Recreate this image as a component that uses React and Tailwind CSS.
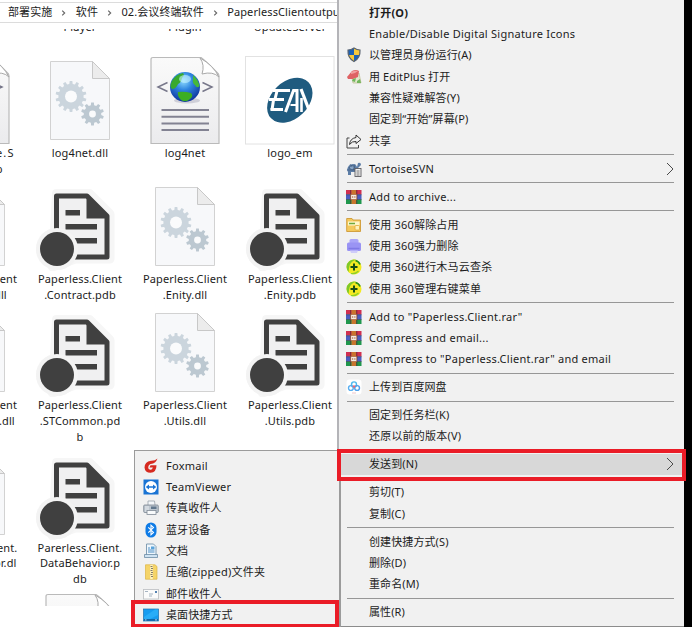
import React from "react";

const GEAR_BIG = gear(20.5, 35, 15.5, 12.6, 14);
const GEAR_SMALL = gear(42, 52.5, 11.5, 8.8, 10);

function gear(cx, cy, outer, inner, teeth) {
  const pts = [];
  const step = (Math.PI * 2) / teeth;
  for (let i = 0; i < teeth; i++) {
    const a = i * step - Math.PI / 2;
    [[-0.3, inner], [-0.19, outer], [0.19, outer], [0.3, inner]].forEach(([o, r]) => {
      pts.push(`${(cx + Math.cos(a + o * step) * r).toFixed(2)},${(cy + Math.sin(a + o * step) * r).toFixed(2)}`);
    });
  }
  return pts.join(" ");
}

/* ---------- file icons (all drawn in a 90x90 box) ---------- */

function DllIcon() {
  return (
    <svg width="90" height="90" viewBox="0 0 90 90" className="block">
      <g transform="translate(15.5 6.5)">
        <path d="M0 0H42L59 17V78H0Z" fill="#f7f8fa" stroke="#d2d2d2" />
        <path d="M42 0V17H59Z" fill="#ececec" stroke="#c8c8c8" />
        <polygon points={GEAR_BIG} fill="#cbd5dd" />
        <circle cx="20.5" cy="35" r="6" fill="#fafbfc" />
        <polygon points={GEAR_SMALL} fill="#bcc8d1" />
        <circle cx="42" cy="52.5" r="3.4" fill="#fafbfc" />
      </g>
    </svg>
  );
}

function PdbIcon() {
  return (
    <svg width="90" height="90" viewBox="0 0 90 90" className="block">
      <g transform="translate(0.5 0)">
        <path d="M21 12.5H54L74.5 33V78H40L17 86Z" fill="#f6f6f6" stroke="#f6f6f6" strokeWidth="9" strokeLinejoin="round" />
        <circle cx="21.5" cy="68" r="21" fill="#f6f6f6" />
        <path d="M21 15H51.5L71.5 35V76H21Z" fill="#f0f0f1" stroke="#404040" strokeWidth="5" strokeLinejoin="round" />
        <path d="M51 14L73 36V37.5H51Z" fill="#404040" />
        <path d="M30 31.8H44.5M30 45.8H61.5M30 59.8H61.5" stroke="#404040" strokeWidth="5.4" />
        <circle cx="21.5" cy="68" r="21" fill="#f3f3f3" />
        <circle cx="21.5" cy="68" r="17" fill="#404040" />
      </g>
    </svg>
  );
}

function ConfigIcon() {
  return (
    <svg width="90" height="90" viewBox="0 0 90 90" className="block">
      <defs>
        <radialGradient id="globe" cx="0.45" cy="0.3" r="0.75">
          <stop offset="0" stopColor="#8fdcff" />
          <stop offset="0.4" stopColor="#2f86e0" />
          <stop offset="1" stopColor="#0a2a94" />
        </radialGradient>
        <linearGradient id="sheet" x1="0" y1="0" x2="0" y2="1">
          <stop offset="0" stopColor="#fafafa" />
          <stop offset="1" stopColor="#ebebed" />
        </linearGradient>
      </defs>
      <path d="M13 2.500H61Q66 6 78.500 19Q79 20 79 22V88.500H11V4.500Q11 2.500 13 2.500Z" fill="url(#sheet)" stroke="#bababa" strokeWidth="1.200" />
      <path d="M60 3Q65 10 62 19Q73 16 79 22Q73 10 60 3Z" fill="#fff" stroke="#a9a9a9" strokeWidth="1" />
      <path d="M27.500 27.500L18 32L27.500 36.500M62.500 27.500L72 32L62.500 36.500" fill="none" stroke="#77778a" strokeWidth="1.500" />
      <ellipse cx="47" cy="45.500" rx="13" ry="3" fill="#cfcfd8" />
      <circle cx="45" cy="32" r="15" fill="url(#globe)" />
      <path d="M32 26Q36 19 43 18Q45 20 42 23Q41 28 38 29Q36 34 32 34Q29 31 32 26Z" fill="#38a92f" />
      <path d="M38 37Q44 36 51 38Q54 41 50 44Q46 48 41 45Q37 41 38 37Z" fill="#3cae22" />
      <path d="M53 20Q58 24 59.500 31Q57 34 55 30Q52 28 53 24Z" fill="#46b83a" />
      <ellipse cx="45" cy="24" rx="6" ry="4" fill="#c7f4ff" opacity="0.6" />
      <path d="M21.500 55H69M21.500 61.800H69M21.500 68.500H69M21.500 75H69" stroke="#828292" strokeWidth="2" />
    </svg>
  );
}

function LogoIcon() {
  return (
    <svg width="90" height="90" viewBox="0 0 90 90" className="block">
      <rect x="0.500" y="1.500" width="88.500" height="87.500" fill="#fff" stroke="#e2e2e2" />
      <ellipse cx="44.800" cy="45.300" rx="26" ry="18.500" transform="rotate(-44 44.800 45.300)" fill="#1f5b7f" />
      <g fill="none" stroke="#fff">
        <path d="M28 35.500H45M24 44.500H39M25.500 54.500H38" strokeWidth="2.800" />
        <path d="M32 36L30 44M28.500 45L27 55" strokeWidth="3" />
        <path d="M40.500 57L48.500 35.500H52V57" strokeWidth="3" />
        <path d="M45.500 50H51" strokeWidth="2" />
        <path d="M56.500 57V43" strokeWidth="2.600" />
        <path d="M56 34L64 55" strokeWidth="3.200" />
      </g>
    </svg>
  );
}

const ICONS = { dll: DllIcon, pdb: PdbIcon, config: ConfigIcon, logo: LogoIcon };

const FILES = [
  [
    ["config", ["Paperlesse.S", "ervice.pdb"]],
    ["dll", ["log4net.dll"]],
    ["config", ["log4net"]],
    ["logo", ["logo_em"]],
  ],
  [
    ["dll", ["Paperless.Client", ".Contract.dll"]],
    ["pdb", ["Paperless.Client", ".Contract.pdb"]],
    ["dll", ["Paperless.Client", ".Enity.dll"]],
    ["pdb", ["Paperless.Client", ".Enity.pdb"]],
  ],
  [
    ["dll", ["Paperless.Client", ".STCommon.dll"]],
    ["pdb", ["Paperless.Client", ".STCommon.pd", "b"]],
    ["dll", ["Paperless.Client", ".Utils.dll"]],
    ["pdb", ["Paperless.Client", ".Utils.pdb"]],
  ],
  [
    ["dll", ["Parerless.Client.", "DataBehavior.dl"]],
    ["pdb", ["Parerless.Client.", "DataBehavior.p", "db"]],
  ],
];

const ROW_HEIGHTS = ["h-[126.3px]", "h-[126px]", "h-[142.400px]", "h-[142px]"];

function FileCell({ type, lines }) {
  const Icon = ICONS[type];
  return (
    <div className="flex flex-col items-center">
      <Icon />
      {lines.map((l) => (
        <span key={l} className={`h-[15.800px] leading-[16px] whitespace-nowrap ${l === "Paperlesse.S" ? "tracking-[1.200px]" : ""}`}>
          {l}
        </span>
      ))}
    </div>
  );
}

/* ---------- 15px menu icons ---------- */

function Svg({ children }) {
  return (
    <svg width="16" height="16" viewBox="0 0 16 16" className="block">
      {children}
    </svg>
  );
}

const Shield = () => (
  <Svg>
    <path d="M8 1Q11 3 14 3Q14.500 11 8 14.500Q1.500 11 2 3Q5 3 8 1Z" fill="#1d62b5" />
    <path d="M8 1Q11 3 14 3V8H8ZM8 8V14.500Q3.500 12.500 2.300 8Z" fill="#f8c93a" />
    <path d="M8 1Q11 3 14 3Q14.500 11 8 14.500Q1.500 11 2 3Q5 3 8 1Z" fill="none" stroke="#586270" strokeWidth="1.200" />
  </Svg>
);
const EditPlus = () => (
  <Svg>
    <path d="M6 9L13 4L15 14L7 14Z" fill="#e2e8cf" stroke="#b9b98e" strokeWidth="0.700" />
    <path d="M1 8L6 2Q10 0 13 2L12 8L7 10L2 10Z" fill="#df6264" />
    <path d="M5 3Q9 1 12 2L9 4L5 5Z" fill="#f1a0a0" />
    <path d="M7 10L10 9L9 13L6 12ZM11 12L14 10L15 14H11Z" fill="#72b65c" />
  </Svg>
);
const Share = () => (
  <Svg>
    <path d="M3.500 5H1V15H12.500V12" fill="none" stroke="#444" strokeWidth="1" />
    <path d="M10 2L15 6.500L10 10.500V8.500Q6 8 3.500 11.500Q4 5.500 10 4.500Z" fill="none" stroke="#333" strokeWidth="1" strokeLinejoin="round" />
  </Svg>
);
const Tortoise = () => (
  <Svg>
    <path d="M1 9Q2 3 7 3Q10 3 11 6L12 2Q15 1 15 4L12 7V13H9V11H5V14H2V11Z" fill="#5c7da6" />
    <path d="M3 7L5 4.500L8 5L9 8L6 9Z" fill="#86a3c4" stroke="#3d5878" strokeWidth="0.700" />
    <path d="M4 3L6 6M9 3L7 9M1 9L9 9" stroke="#3f5d80" strokeWidth="0.600" />
    <rect x="9" y="7.500" width="6" height="8" fill="#f1f1f1" stroke="#5c5c60" strokeWidth="0.900" />
    <path d="M10.500 10H13.500M10.500 12H13.500M10.500 14H13.500" stroke="#555" strokeWidth="0.800" />
  </Svg>
);
const Rar = () => (
  <Svg>
    <rect x="0" y="1" width="15.500" height="4.500" fill="#d02f50" />
    <rect x="0" y="5.500" width="15.500" height="5" fill="#4a5cc0" />
    <rect x="0" y="10.500" width="15.500" height="4.500" fill="#1f964c" />
    <path d="M0 5.700H15.500M0 10.500H15.500" stroke="#38344a" strokeWidth="0.600" />
    <path d="M4.700 1V15M10.800 1V15" stroke="#5a2c30" strokeWidth="0.800" />
    <rect x="5.500" y="1" width="4.500" height="14" fill="#c9742c" />
    <rect x="4.800" y="5.500" width="6" height="5" fill="#f4ece2" stroke="#a3562d" strokeWidth="0.600" />
    <path d="M6.700 7V9M8.900 7V9" stroke="#a3562d" strokeWidth="0.700" />
  </Svg>
);
const Folder360 = () => (
  <Svg>
    <path d="M0.700 1.500H6L7 3H14.500V14.500H0.700Z" fill="#f4c95c" stroke="#cf9a36" strokeWidth="0.900" />
    <rect x="2" y="4.500" width="11.500" height="4" fill="#fdf6c9" />
    <path d="M3 6.500H9" stroke="#6fa83f" strokeWidth="1.500" />
    <rect x="9" y="8.500" width="4.500" height="4.500" rx="1" fill="#fff3bc" stroke="#dfa93c" strokeWidth="0.800" />
  </Svg>
);
const Shred = () => (
  <Svg>
    <rect x="3.500" y="1" width="9" height="6" rx="1.500" fill="#aaa5f8" />
    <rect x="1" y="4.500" width="14" height="8.500" rx="1.500" fill="#9a94f4" />
    <path d="M2.500 10.500H13.500" stroke="#7f79e6" strokeWidth="1.500" />
    <path d="M4 12.500H12L11 15H5Z" fill="#cfccfa" />
  </Svg>
);
const Safe360 = () => (
  <Svg>
    <circle cx="8" cy="8" r="7.500" fill="#f3ea22" />
    <path d="M0.500 8A7.500 7.500 0 0 1 10 0.800Q3.500 3 3.300 8Q2.500 11 3 13.300A7.500 7.500 0 0 1 0.500 8Z" fill="#7fc92a" />
    <path d="M9.500 1.500Q13 2.500 14 5.500" stroke="#218b22" strokeWidth="1.600" fill="none" />
    <path d="M5 14.500Q10 15 12.500 12" stroke="#8ccf2a" strokeWidth="1.200" fill="none" />
    <path d="M8 4.500V11.500M4.500 8H11.500" stroke="#174d16" strokeWidth="2" />
  </Svg>
);
const Baidu = () => (
  <Svg>
    <rect x="0.500" y="0.500" width="15" height="15" rx="3" fill="#fff" />
    <g fill="none" strokeWidth="1.400">
      <circle cx="8" cy="5.400" r="2.500" stroke="#4fb9ee" />
      <circle cx="4.900" cy="9" r="2.400" stroke="#58aef0" />
      <circle cx="11.100" cy="9" r="2.400" stroke="#4fa0ea" />
    </g>
    <circle cx="8" cy="7.500" r="1.200" fill="#ee6a72" />
    <path d="M6 14H10" stroke="#e7aeb2" strokeWidth="0.700" />
  </Svg>
);
const Foxmail = () => (
  <Svg>
    <path d="M14.500 0.500Q12 3 8 2.800Q1.500 4 1.500 9.500Q2 14.800 7.500 14.800Q13.500 14.500 13.500 7.300H7.500L6.500 9.600H9.900Q9.200 11.900 7.300 11.800Q5 11.600 5.200 9.200Q5.700 6 9 5.700Q12.500 5.500 14.500 0.500Z" fill="#d62a20" />
  </Svg>
);
const TeamViewer = () => (
  <Svg>
    <rect x="0.500" y="0.500" width="15" height="15" fill="#1a74d4" />
    <circle cx="8" cy="8" r="6" fill="#fff" />
    <path d="M2.700 8L6 5.500V7.200H10V5.500L13.300 8L10 10.500V8.800H6V10.500Z" fill="#1a74d4" />
  </Svg>
);
const Fax = () => (
  <Svg>
    <path d="M5 5V1H11.500L12 5" fill="#f4f7fa" stroke="#9aa2ab" strokeWidth="0.800" />
    <rect x="0.700" y="5" width="14.600" height="7.500" rx="1" fill="#bcc5ce" stroke="#7b8792" strokeWidth="0.800" />
    <path d="M2 7H6M2 9H6M2 11H6" stroke="#eef2f5" strokeWidth="0.900" />
    <rect x="8" y="6.500" width="5.500" height="2.500" fill="#62788e" />
    <rect x="4" y="10.500" width="9" height="4" fill="#f8fafb" stroke="#808b96" strokeWidth="0.800" />
  </Svg>
);
const Bluetooth = () => (
  <Svg>
    <rect x="2.500" y="0.500" width="11" height="15" rx="5.500" fill="#0e7be6" />
    <path d="M5.300 5.300L10.500 10.400L8 12.800V3.200L10.500 5.600L5.300 10.700" fill="none" stroke="#fff" strokeWidth="1.100" />
  </Svg>
);
const Doc = () => (
  <Svg>
    <path d="M3.500 1H10.500L13 3.500V13H3.500Z" fill="#eef6fc" stroke="#7594ad" strokeWidth="0.900" />
    <path d="M5 5H7M5 7H11.500M5 9H11.500" stroke="#4e8fc4" strokeWidth="1" />
    <rect x="8" y="3.500" width="3.500" height="2.500" fill="#5ba3da" />
    <path d="M1.500 11.500H14.500V14.500H1.500Z" fill="#cfe3f2" stroke="#6b8ba5" strokeWidth="0.800" />
  </Svg>
);
const Zip = () => (
  <Svg>
    <path d="M2.500 0.800H12L14 2.500V15.200H2.500Z" fill="#f5d468" stroke="#dcb544" strokeWidth="0.700" />
    <path d="M8.500 1V15" stroke="#fff3c0" strokeWidth="2.500" />
    <path d="M7.500 2.500H9.500M8 4.500H10M7.500 6.500H9.500M8 8.500H10M7.500 10.500H9.500M8 12.500H10" stroke="#857c68" strokeWidth="1" />
  </Svg>
);
const Mail = () => (
  <Svg>
    <rect x="0.500" y="3.500" width="15" height="9.500" fill="#fbfbfb" stroke="#c0c3c6" strokeWidth="0.900" />
    <path d="M2 5.500H5M6 8H10M6 10H9" stroke="#90a2b4" strokeWidth="0.800" />
    <rect x="12" y="5" width="2" height="2" fill="#5582b2" />
  </Svg>
);
const Desktop = () => (
  <Svg>
    <rect x="0.500" y="2" width="15" height="12" fill="#169cf0" stroke="#1a6fae" strokeWidth="0.700" />
    <path d="M1 10L12 2.500H15V8L7 12H1Z" fill="#28adf8" />
    <path d="M1 12.900H15" stroke="#0f4f86" strokeWidth="1.200" />
    <path d="M2 12.900H3.500M12 12.900H14" stroke="#d6effd" strokeWidth="0.800" />
  </Svg>
);

const Chevron = () => (
  <svg width="8" height="14" viewBox="0 0 8 14" className="block">
    <path d="M1 1L7 7L1 13" fill="none" stroke="#4a4a4a" strokeWidth="1" />
  </svg>
);

const LAT = "tracking-[0.25px]";
const CJK = "tracking-[0.1px]";

const MENU = [
  [
    { t: "打开(O)", c: "font-bold tracking-[0.2px]" },
    { t: "Enable/Disable Digital Signature Icons", c: LAT },
    { t: "以管理员身份运行(A)", I: Shield },
    { t: "用 EditPlus 打开", I: EditPlus },
    { t: "兼容性疑难解答(Y)" },
    { t: "固定到“开始”屏幕(P)" },
    { t: "共享", I: Share },
  ],
  [{ t: "TortoiseSVN", I: Tortoise, c: LAT, more: true }],
  [{ t: "Add to archive...", I: Rar, c: LAT }],
  [
    { t: "使用 360解除占用", I: Folder360, c: "tracking-[0.2px]" },
    { t: "使用 360强力删除", I: Shred, c: "tracking-[0.2px]" },
    { t: "使用 360进行木马云查杀", I: Safe360, c: "tracking-[0.2px]" },
    { t: "使用 360管理右键菜单", I: Safe360, c: "tracking-[0.2px]" },
  ],
  [
    { t: 'Add to "Paperless.Client.rar"', I: Rar, c: LAT },
    { t: "Compress and email...", I: Rar, c: LAT },
    { t: 'Compress to "Paperless.Client.rar" and email', I: Rar, c: LAT },
  ],
  [{ t: "上传到百度网盘", I: Baidu }],
  [{ t: "固定到任务栏(K)" }, { t: "还原以前的版本(V)", c: "tracking-[0.2px]" }],
  [{ t: "发送到(N)", more: true, active: true }],
  [{ t: "剪切(T)" }, { t: "复制(C)" }],
  [{ t: "创建快捷方式(S)" }, { t: "删除(D)" }, { t: "重命名(M)" }],
  [{ t: "属性(R)" }],
];

const SEND_TO = [
  { t: "Foxmail", I: Foxmail, c: LAT },
  { t: "TeamViewer", I: TeamViewer, c: LAT },
  { t: "传真收件人", I: Fax },
  { t: "蓝牙设备", I: Bluetooth },
  { t: "文档", I: Doc },
  { t: "压缩(zipped)文件夹", I: Zip, c: "tracking-[0.25px]" },
  { t: "邮件收件人", I: Mail },
  { t: "桌面快捷方式", I: Desktop },
];

function MenuItem({ item }) {
  const { t, I, c, more, active } = item;
  return (
    <div className={`flex h-[21.350px] items-center pr-[10px] pl-[7px] ${active ? "bg-[#d8d8d8]" : ""}`}>
      <span className="w-[23px] shrink-0">{I && <I />}</span>
      <span className={`flex-1 leading-[20px] whitespace-nowrap ${c || CJK}`}>{t}</span>
      {more && <Chevron />}
    </div>
  );
}

function Crumb({ children, last }) {
  return (
    <>
      <span className="whitespace-nowrap">{children}</span>
      {!last && (
        <svg width="23.4" height="10" viewBox="0 0 24 10" className="shrink-0">
          <path d="M10.500 2.500L13 5L10.500 7.500" fill="none" stroke="#666" strokeWidth="1.200" />
        </svg>
      )}
    </>
  );
}

export default function App() {
  return (
    <div className="relative flex h-[627px] w-[692px] overflow-hidden bg-white font-['Noto_Sans','Noto_Sans_CJK_SC',sans-serif] text-[11px] text-[#1c1c1c]">
      <main className="flex w-[337px] shrink-0 flex-col overflow-hidden">
        <header className="mt-[2px] flex h-[21px] shrink-0 items-center border-y border-[#dcdcdc] pl-2 tracking-[0.1px]">
          <Crumb>部署实施</Crumb>
          <Crumb>软件</Crumb>
          <Crumb>02.会议终端软件</Crumb>
          <Crumb last>PaperlessClientoutput</Crumb>
        </header>
        <section className="mt-[6px] -ml-[77.500px] h-[577px] w-[420px] shrink-0 overflow-hidden tracking-[0.140px]">
          <div className="-mt-[10px] grid h-[36px] grid-cols-[repeat(4,105px)] text-center leading-[16px]">
            <span />
            <span>Player</span>
            <span>Plugin</span>
            <span>UpdateServer</span>
          </div>
          {FILES.map((row, i) => (
            <div key={i} className={`grid grid-cols-[repeat(4,105px)] ${ROW_HEIGHTS[i]}`}>
              {row.map(([type, lines], j) => (
                <FileCell key={j} type={type} lines={lines} />
              ))}
            </div>
          ))}
          <div className="grid grid-cols-[repeat(4,105px)]">
            <span />
            <FileCell type="config" lines={[]} />
          </div>
        </section>
      </main>

      <nav className="flex w-[346.500px] shrink-0 flex-col border-b border-l-2 border-b-[#8c8c8c] border-l-[#b4b4b8] bg-[#f1f1f1] pt-[2px]">
        {MENU.map((group, i) => (
          <React.Fragment key={i}>
            {i > 0 && (
              <div className="flex h-[6.600px] shrink-0 items-center pr-[10px] pl-2">
                <div className="h-px w-full bg-[#979797]" />
              </div>
            )}
            {group.map((item) => (
              <MenuItem key={item.t} item={item} />
            ))}
          </React.Fragment>
        ))}
      </nav>
      <aside className="flex-1 bg-black" />

      <div className="absolute top-[450px] left-[134px] h-[177px] w-[207px] border-t border-r-2 border-l border-[#9b9b9b] bg-[#f1f1f1] pt-[4px] pl-px">
        {SEND_TO.map((item) => (
          <MenuItem key={item.t} item={item} />
        ))}
      </div>

      <div className="absolute top-[449px] left-[337px] h-[32px] w-[348.500px] border-4 border-[#ea1c27]" />
      <div className="absolute top-[600px] left-[131px] h-[28px] w-[208px] border-4 border-[#ea1c27]" />
    </div>
  );
}
